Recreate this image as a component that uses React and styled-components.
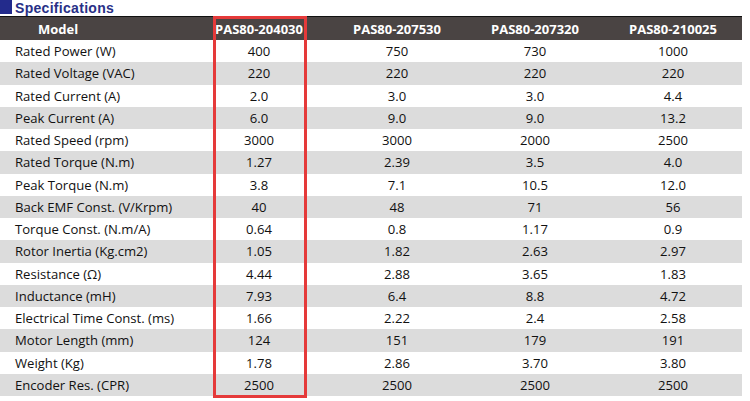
import styled, { createGlobalStyle } from 'styled-components'

const GlobalStyle = createGlobalStyle`
  html, body {
    margin: 0;
    padding: 0;
    background: #ffffff;
  }
  body {
    font-family: 'Open Sans', 'Noto Sans', sans-serif;
    color: #111111;
  }
`

const Page = styled.div`
  width: 750px;
  height: 401px;
  overflow: hidden;
`

const TitleBar = styled.div`
  display: flex;
  align-items: flex-start;
  gap: 3px;
  height: 16px;
`

const TitleMark = styled.span`
  width: 12px;
  height: 14px;
  background: #232b8c;
`

const Title = styled.h2`
  margin: 0;
  font-family: 'Liberation Sans', Arial, sans-serif;
  font-size: 14px;
  line-height: 16px;
  font-weight: 700;
  letter-spacing: 0.3px;
  color: #283087;
`

const TableWrap = styled.div`
  position: relative;
  width: 742px;
`

const Table = styled.table`
  width: 742px;
  border-collapse: collapse;
  table-layout: fixed;
  border-top: 1px solid #111111;
`

const HeadCell = styled.th`
  height: 23px;
  padding: 0;
  background: #4a4443;
  color: #ffffff;
  font-size: 13px;
  font-weight: 700;
  text-align: ${(p) => (p.$label ? 'left' : 'center')};
  padding-left: ${(p) => (p.$label ? '38px' : '0')};
`

const Row = styled.tr`
  background: ${(p) => (p.$shaded ? '#dcdcdc' : '#ffffff')};
`

const LabelCell = styled.td`
  height: 22.25px;
  padding: 0 0 0 15px;
  font-size: 13.1px;
  white-space: nowrap;
`

const ValueCell = styled.td`
  padding: 0;
  text-align: center;
  font-size: 13.1px;
`

const Highlight = styled.div`
  position: absolute;
  left: 213px;
  top: 0;
  width: 94px;
  height: 382px;
  border: 3px solid #e53a3a;
  box-sizing: border-box;
  pointer-events: none;
`

const models = ['PAS80-204030', 'PAS80-207530', 'PAS80-207320', 'PAS80-210025']

const specs = [
  ['Rated Power (W)', '400', '750', '730', '1000'],
  ['Rated Voltage (VAC)', '220', '220', '220', '220'],
  ['Rated Current (A)', '2.0', '3.0', '3.0', '4.4'],
  ['Peak Current (A)', '6.0', '9.0', '9.0', '13.2'],
  ['Rated Speed (rpm)', '3000', '3000', '2000', '2500'],
  ['Rated Torque (N.m)', '1.27', '2.39', '3.5', '4.0'],
  ['Peak Torque (N.m)', '3.8', '7.1', '10.5', '12.0'],
  ['Back EMF Const. (V/Krpm)', '40', '48', '71', '56'],
  ['Torque Const. (N.m/A)', '0.64', '0.8', '1.17', '0.9'],
  ['Rotor Inertia (Kg.cm2)', '1.05', '1.82', '2.63', '2.97'],
  ['Resistance (Ω)', '4.44', '2.88', '3.65', '1.83'],
  ['Inductance (mH)', '7.93', '6.4', '8.8', '4.72'],
  ['Electrical Time Const. (ms)', '1.66', '2.22', '2.4', '2.58'],
  ['Motor Length (mm)', '124', '151', '179', '191'],
  ['Weight (Kg)', '1.78', '2.86', '3.70', '3.80'],
  ['Encoder Res. (CPR)', '2500', '2500', '2500', '2500'],
]

export default function App() {
  return (
    <Page>
      <GlobalStyle />
      <TitleBar>
        <TitleMark />
        <Title>Specifications</Title>
      </TitleBar>
      <TableWrap>
        <Table>
          <colgroup>
            <col style={{ width: 190 }} />
            <col style={{ width: 138 }} />
            <col style={{ width: 138 }} />
            <col style={{ width: 138 }} />
            <col style={{ width: 138 }} />
          </colgroup>
          <thead>
            <tr>
              <HeadCell $label>Model</HeadCell>
              {models.map((m) => (
                <HeadCell key={m}>{m}</HeadCell>
              ))}
            </tr>
          </thead>
          <tbody>
            {specs.map(([label, ...values], i) => (
              <Row key={label} $shaded={i % 2 === 1}>
                <LabelCell>{label}</LabelCell>
                {values.map((v, j) => (
                  <ValueCell key={j}>{v}</ValueCell>
                ))}
              </Row>
            ))}
          </tbody>
        </Table>
        <Highlight />
      </TableWrap>
    </Page>
  )
}
